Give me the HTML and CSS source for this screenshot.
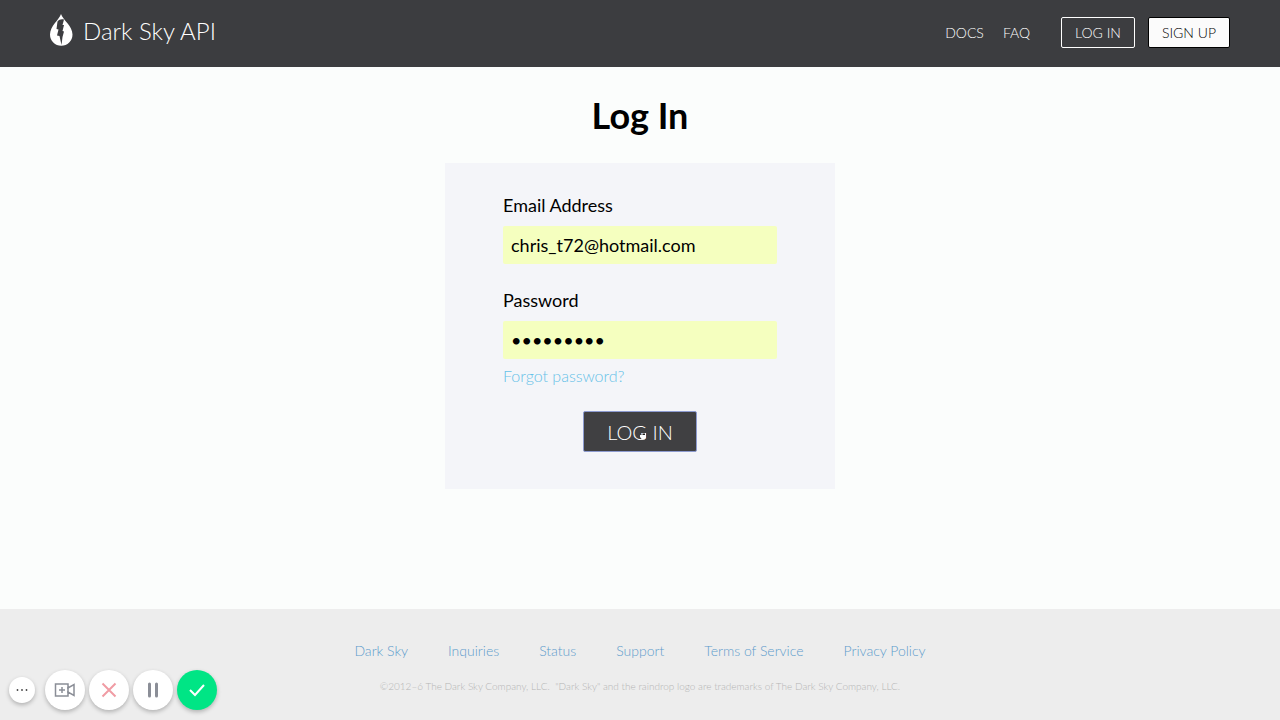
FILE: index.html
```html
<!DOCTYPE html>
<html lang="en">
<head>
  <meta charset="UTF-8">
  <meta name="viewport" content="width=device-width, initial-scale=1">
  <title>Dark Sky API: Log In</title>
  <link rel="stylesheet" href="styles.css">
</head>
<body>

  <header>
    <a class="logo" href="#">
      <svg width="24" height="32" viewBox="0 0 24 32">
        <path fill="#fff" d="M12 0C10 6 1 12 1 20.500a11 11 0 0 0 22.500 0C23.500 12 14 6 12 0z"/>
        <path fill="#3c3d40" d="M8.500 7.500C10 5.500 12 5 15 5.500L13.500 11L15 11L13.500 17L15 17.500L13.500 23L12.500 31L10.500 22L8 21.500L9.500 15.500L7.500 15z"/>
      </svg>
      <span>Dark Sky API</span>
    </a>
    <nav>
      <a href="#">DOCS</a>
      <a href="#">FAQ</a>
      <a class="nav-btn" href="#">LOG IN</a>
      <a class="nav-btn signup" href="#">SIGN UP</a>
    </nav>
  </header>

  <main>
    <h1>Log In</h1>
    <form>
      <label for="email">Email Address</label>
      <input type="email" id="email" value="chris_t72@hotmail.com">
      <label for="password">Password</label>
      <input type="password" id="password" value="password1">
      <a class="forgot" href="#">Forgot password?</a>
      <button type="submit" class="login-btn">LOG IN
        <svg class="cursor" width="8" height="9" viewBox="0 0 8 9">
          <path fill="#fff" d="M1 4L2.500 4V2H7V6.500L5.500 8.500H3L1 6z"/>
          <path fill="#222" d="M3.500 2.500h2.500v1.500h-2.500z"/>
        </svg>
      </button>
    </form>
  </main>

  <footer>
    <div class="footer-links">
      <a href="#">Dark Sky</a>
      <a href="#">Inquiries</a>
      <a href="#">Status</a>
      <a href="#">Support</a>
      <a href="#">Terms of Service</a>
      <a href="#">Privacy Policy</a>
    </div>
    <p>©2012–6 The Dark Sky Company, LLC. &nbsp;"Dark Sky" and the raindrop logo are trademarks of The Dark Sky Company, LLC.</p>
  </footer>

  <!-- recorder controls -->
  <div class="recorder">
    <button class="small" aria-label="More">
      <svg width="14" height="4" viewBox="0 0 14 4" fill="#444">
        <circle cx="2.500" cy="2" r=".9"/><circle cx="7" cy="2" r=".9"/><circle cx="11.500" cy="2" r=".9"/>
      </svg>
    </button>
    <button aria-label="Camera">
      <svg width="22" height="16" viewBox="0 0 22 16" fill="none" stroke="#8b8e97" stroke-width="1.500">
        <path d="M1.500 2H14V6L20 2.500V13.500L14 10V14H1.500z"/>
        <path d="M14 5v6M8 5v6M5 8h6"/>
      </svg>
    </button>
    <button aria-label="Cancel">
      <svg width="16" height="16" viewBox="0 0 16 16" stroke="#f09ca4" stroke-width="2">
        <path d="M1.500 1.500L14.500 14.500M14.500 1.500L1.500 14.500"/>
      </svg>
    </button>
    <button aria-label="Pause">
      <svg width="12" height="16" viewBox="0 0 12 16" stroke="#8b8e97" stroke-width="3" stroke-linecap="round">
        <path d="M2.500 2V14M9.500 2V14"/>
      </svg>
    </button>
    <button class="done" aria-label="Finish">
      <svg width="18" height="14" viewBox="0 0 18 14" fill="none" stroke="#fff" stroke-width="2">
        <path d="M2 7L7 12L16 2"/>
      </svg>
    </button>
  </div>

</body>
</html>
```
FILE: styles.css
```css
* {
  box-sizing: border-box;
}
body {
  margin: 0;
  min-height: 100vh;
  display: flex;
  flex-direction: column;
  background-color: #fbfdfc;
  color: #000;
  font-family: Lato, sans-serif;
}
a {
  text-decoration: none;
}
header {
  display: flex;
  justify-content: space-between;
  align-items: center;
  height: 67px;
  padding: 0 50px 3px 49px;
  background-color: #3c3d40;
}
.logo {
  display: flex;
  align-items: center;
  gap: 10px;
  padding-bottom: 4px;
  color: #fff;
  font-size: 24px;
  font-weight: 300;
}
nav {
  display: flex;
  align-items: center;
  gap: 19px;
}
nav a {
  color: #fff;
  font-size: 14px;
  font-weight: 300;
}
.nav-btn {
  margin-left: 12px;
  padding: 0 13px;
  border: 1px solid #fff;
  border-radius: 2px;
  line-height: 29px;
}
.signup {
  margin-left: -6px;
  background-color: #fbfbfb;
  border-color: #000;
  color: #000;
}
main {
  flex: 1;
  padding: 24px 20px;
}
h1 {
  margin: 0 0 24px;
  font-size: 36px;
  line-height: 48px;
  text-align: center;
}
form {
  display: flex;
  flex-direction: column;
  max-width: 390px;
  margin: 0 auto;
  padding: 27px 58px 37px;
  background-color: #f4f5f9;
}
label {
  font-size: 18px;
  line-height: 30px;
}
input {
  width: 100%;
  height: 38px;
  margin: 6px 0 21px;
  padding: 0 8px;
  border: none;
  border-radius: 2px;
  background-color: #f5ffbf;
  font-family: Lato, sans-serif;
  font-size: 18px;
}
#password {
  margin-bottom: 5px;
}
.forgot {
  align-self: flex-start;
  color: #65c1e8;
  font-size: 16px;
  font-weight: 300;
  line-height: 24px;
}
.login-btn {
  position: relative;
  align-self: center;
  height: 41px;
  margin-top: 23px;
  padding: 0 23px;
  border: 1px solid #8d9bd0;
  border-radius: 2px;
  background-color: #404042;
  color: #fff;
  font-family: Lato, sans-serif;
  font-size: 20px;
  font-weight: 300;
}
.cursor {
  position: absolute;
  top: 19px;
  left: 55px;
}
footer {
  padding: 30px 20px 24px;
  background-color: #ededed;
  text-align: center;
}
.footer-links {
  display: flex;
  flex-wrap: wrap;
  justify-content: center;
  gap: 0 40px;
  line-height: 24px;
}
.footer-links a {
  color: #5d9ccc;
  font-size: 14px;
  font-weight: 300;
}
footer p {
  margin: 13px 0 0;
  color: #b5b5b5;
  font-size: 10px;
  font-weight: 300;
  line-height: 20px;
}
.recorder {
  position: fixed;
  left: 9px;
  bottom: 10px;
  display: flex;
  align-items: center;
  gap: 4px;
}
.recorder button {
  display: flex;
  justify-content: center;
  align-items: center;
  width: 40px;
  height: 40px;
  padding: 0;
  border: none;
  border-radius: 50%;
  background-color: #fff;
  box-shadow: 0 2px 4px rgba(0, 0, 0, 0.25);
}
.recorder .small {
  width: 26px;
  height: 26px;
  margin-right: 6px;
}
.recorder .done {
  background-color: #00e585;
}
```
